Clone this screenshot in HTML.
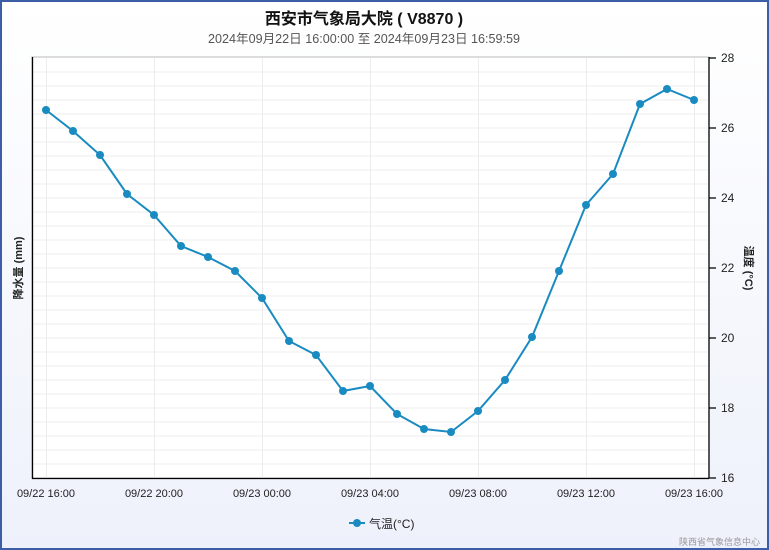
<!DOCTYPE html>
<html><head><meta charset="utf-8"><style>
html,body{margin:0;padding:0}
body{width:769px;height:550px;overflow:hidden;font-family:"Liberation Sans","Noto Sans CJK SC",sans-serif}
.wrap{position:absolute;left:0;top:0;width:765px;height:546px;border:2px solid #3b5ea6;background:linear-gradient(#ffffff,#eef1fb)}
</style></head><body>
<div class="wrap"></div>
<svg width="769" height="550" style="position:absolute;left:0;top:0" font-family="Liberation Sans, Noto Sans CJK SC, sans-serif">
<text x="364" y="24" font-size="16" font-weight="bold" text-anchor="middle" fill="#111">西安市气象局大院 ( V8870 )</text>
<text x="364" y="43" font-size="12.5" text-anchor="middle" fill="#555" textLength="312" lengthAdjust="spacingAndGlyphs">2024年09月22日 16:00:00 至 2024年09月23日 16:59:59</text>
<rect x="32" y="57" width="677" height="421" fill="#fff" stroke="#bbb" stroke-width="1"/>
<g stroke="#ececec" stroke-width="1">
<path d="M32 72H708M32 86H708M32 100H708M32 114H708M32 128H708M32 142H708M32 156H708M32 170H708M32 184H708M32 198H708M32 212H708M32 226H708M32 240H708M32 254H708M32 268H708M32 282H708M32 296H708M32 310H708M32 324H708M32 338H708M32 352H708M32 366H708M32 380H708M32 394H708M32 408H708M32 422H708M32 436H708M32 450H708M32 464H708"/>
<path d="M46.5 58V478M154.5 58V478M262.5 58V478M370.5 58V478M478.5 58V478M586.5 58V478M694.5 58V478"/>
</g>
<path d="M32.5 57V478.5H709M709 57V478" stroke="#000" stroke-width="1.3" fill="none"/>
<g stroke="#000" stroke-width="1.2"><path d="M709 58H716M709 128H716M709 198H716M709 268H716M709 338H716M709 408H716M709 478H716"/></g>
<g font-size="12" fill="#222"><text x="721" y="62">28</text><text x="721" y="132">26</text><text x="721" y="202">24</text><text x="721" y="272">22</text><text x="721" y="342">20</text><text x="721" y="412">18</text><text x="721" y="482">16</text></g>
<g font-size="11" fill="#222" text-anchor="middle"><text x="46" y="497">09/22 16:00</text><text x="154" y="497">09/22 20:00</text><text x="262" y="497">09/23 00:00</text><text x="370" y="497">09/23 04:00</text><text x="478" y="497">09/23 08:00</text><text x="586" y="497">09/23 12:00</text><text x="694" y="497">09/23 16:00</text></g>
<text transform="translate(22,268) rotate(-90)" font-size="11" font-weight="bold" text-anchor="middle" fill="#222">降水量 (mm)</text>
<text transform="translate(745,268) rotate(90)" font-size="11" font-weight="bold" text-anchor="middle" fill="#222">温度 (°C)</text>
<polyline fill="none" stroke="#1a8bc0" stroke-width="2" points="46,110 73,131 100,155 127,194 154,215 181,246 208,257 235,271 262,298 289,341 316,355 343,391 370,386 397,414 424,429 451,432 478,411 505,380 532,337 559,271 586,205 613,174 640,104 667,89 694,100"/>
<g fill="#1a8bc0">
<circle cx="46" cy="110" r="4"/><circle cx="73" cy="131" r="4"/><circle cx="100" cy="155" r="4"/><circle cx="127" cy="194" r="4"/><circle cx="154" cy="215" r="4"/><circle cx="181" cy="246" r="4"/><circle cx="208" cy="257" r="4"/><circle cx="235" cy="271" r="4"/><circle cx="262" cy="298" r="4"/><circle cx="289" cy="341" r="4"/><circle cx="316" cy="355" r="4"/><circle cx="343" cy="391" r="4"/><circle cx="370" cy="386" r="4"/><circle cx="397" cy="414" r="4"/><circle cx="424" cy="429" r="4"/><circle cx="451" cy="432" r="4"/><circle cx="478" cy="411" r="4"/><circle cx="505" cy="380" r="4"/><circle cx="532" cy="337" r="4"/><circle cx="559" cy="271" r="4"/><circle cx="586" cy="205" r="4"/><circle cx="613" cy="174" r="4"/><circle cx="640" cy="104" r="4"/><circle cx="667" cy="89" r="4"/><circle cx="694" cy="100" r="4"/>
</g>
<path d="M349 523H365" stroke="#1a8bc0" stroke-width="2"/><circle cx="357" cy="523" r="4" fill="#1a8bc0"/>
<text x="369" y="528" font-size="12" fill="#222">气温(°C)</text>
<text x="760" y="545" font-size="9" text-anchor="end" fill="#999">陕西省气象信息中心</text>
</svg>
</body></html>
